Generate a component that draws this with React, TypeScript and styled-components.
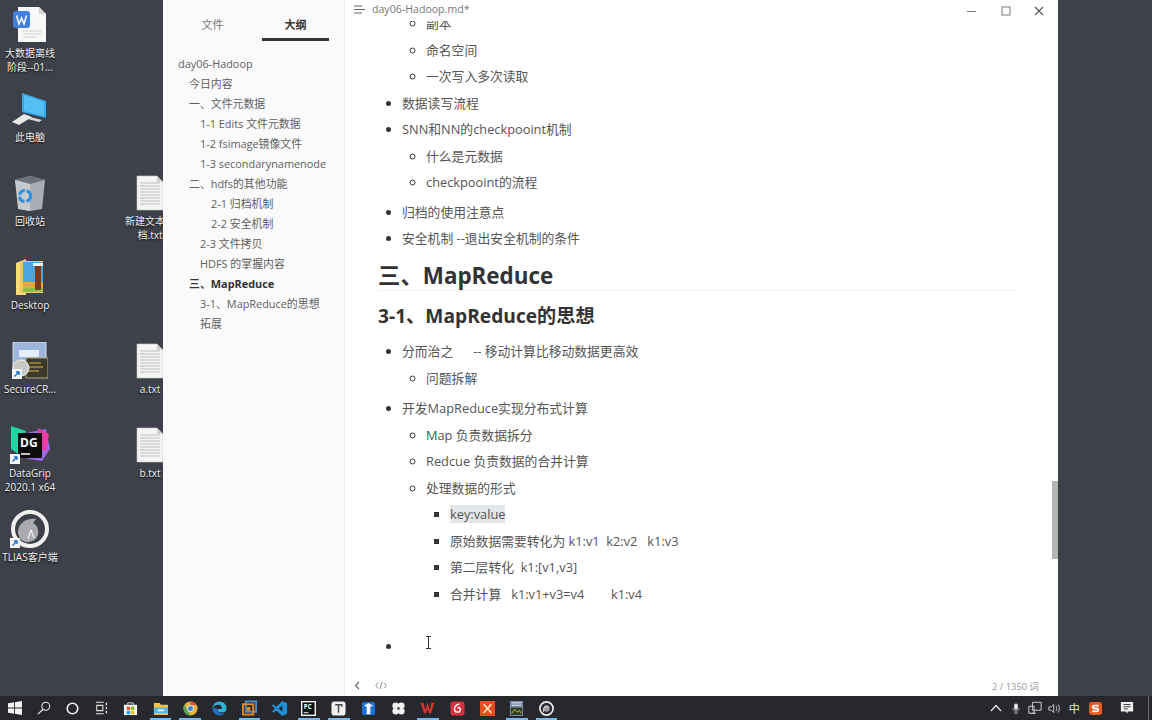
import React from "react";
import styled, { createGlobalStyle } from "styled-components";

const FONT = `"Open Sans", "Noto Sans CJK SC", sans-serif`;

const Global = createGlobalStyle`
  html, body { margin: 0; padding: 0; background: #3e4149; overflow: hidden; }
  * { box-sizing: border-box; }
`;

const Screen = styled.div`
  width: 1152px;
  height: 720px;
  display: flex;
  flex-direction: column;
  font-family: ${FONT};
  overflow: hidden;
`;

const Desktop = styled.div`
  position: relative;
  flex: none;
  height: 696px;
  background: #3e4149;
  padding: 0 94px 0 163px;
  display: flex;
`;

const DesktopIcon = styled.div<{ $x: number; $y: number }>`
  position: absolute;
  left: ${(p) => p.$x}px;
  top: ${(p) => p.$y}px;
  width: 60px;
  display: flex;
  flex-direction: column;
  align-items: center;
`;

const IconArt = styled.div`
  width: 40px;
  height: 40px;
  display: flex;
  align-items: center;
  justify-content: center;
`;

const IconLabel = styled.div`
  margin-top: 1px;
  width: 66px;
  color: #f2f2f2;
  font-size: 10px;
  line-height: 14px;
  text-align: center;
  white-space: pre;
  text-shadow: 0 1px 2px #000;
`;

const Window = styled.div`
  position: relative;
  flex: 1;
  display: flex;
  min-width: 0;
  background: #fff;
  z-index: 1;
`;

const Sidebar = styled.aside`
  flex: none;
  width: 182px;
  background: #fafafa;
  border-right: 1px solid #f0f0f0;
  display: flex;
  flex-direction: column;
`;

const Tabs = styled.div`
  display: flex;
  height: 41px;
  padding: 0 0 0 16px;
  gap: 16px;
`;

const Tab = styled.div<{ $active?: boolean }>`
  flex: none;
  width: 67px;
  display: flex;
  align-items: center;
  justify-content: center;
  padding-top: 9px;
  font-size: 11px;
  font-weight: ${(p) => (p.$active ? 700 : 400)};
  color: ${(p) => (p.$active ? "#333" : "#777")};
  border-bottom: 3px solid ${(p) => (p.$active ? "#333" : "transparent")};
`;

const Outline = styled.nav`
  display: flex;
  flex-direction: column;
  padding: 13px 0 0 15px;
`;

const OutlineItem = styled.div<{ $level: number; $strong?: boolean }>`
  height: 20px;
  line-height: 20px;
  font-size: 10.9px;
  white-space: nowrap;
  padding-left: ${(p) => p.$level * 11}px;
  color: ${(p) => (p.$strong ? "#333" : "#5e5e5e")};
  font-weight: ${(p) => (p.$strong ? 700 : 400)};
`;

const Main = styled.main`
  position: relative;
  flex: 1;
  min-width: 0;
  display: flex;
  flex-direction: column;
`;

const TitleBar = styled.header`
  flex: none;
  height: 21px;
  display: flex;
  align-items: center;
  padding: 0 0 3px 9px;
  background: #fff;
  position: relative;
  z-index: 2;
`;

const FileName = styled.span`
  margin-left: 6px;
  font-size: 10.6px;
  color: #777;
`;

const WinControls = styled.div`
  margin-left: auto;
  display: flex;
  align-items: center;
  padding: 4px 2px 0 0;
`;

const WinButton = styled.div`
  width: 33.5px;
  height: 14px;
  display: flex;
  align-items: center;
  justify-content: center;
`;

const Doc = styled.article`
  flex: 1;
  min-height: 0;
  overflow: hidden;
  padding: 0 40px 0 33px;
  color: #555;
  font-size: 12.8px;
  line-height: 20.5px;
`;

const List = styled.ul<{ $kind: "disc" | "circle" | "square"; $top?: number }>`
  margin: ${(p) => p.$top ?? 0}px 0 0;
  padding: 0 0 0 24px;
  list-style-type: ${(p) => p.$kind};
`;

const Item = styled.li<{ $gap?: number; $bare?: boolean }>`
  margin-top: ${(p) => p.$gap ?? 6}px;
  white-space: pre;
  ${(p) => (p.$bare ? "list-style: none;" : "")}
  &::marker { color: #333; }
`;

const NestedOnly = styled.ul<{ $top?: number }>`
  margin: ${(p) => p.$top ?? 0}px 0 0 -24px;
  padding: 0 0 0 48px;
  list-style-type: circle;
`;

const H1 = styled.h1`
  margin: 14px 0 0;
  padding-bottom: 1px;
  font-size: 22.4px;
  line-height: 26px;
  font-weight: 700;
  color: #333;
  border-bottom: 1px solid #f2f2f2;
`;

const H2 = styled.h2`
  margin: 11px 0 0;
  font-size: 19.2px;
  line-height: 28px;
  font-weight: 700;
  color: #333;
`;

const Mark = styled.span`
  background: #e4e7ea;
  padding: 0;
`;

const EmptyLine = styled.div`
  height: 20.5px;
`;

const StatusBar = styled.footer`
  flex: none;
  height: 21px;
  display: flex;
  align-items: center;
  padding: 0 19px 0 9px;
  gap: 15px;
  background: #fff;
`;

const WordCount = styled.span`
  margin-left: auto;
  font-size: 9.4px;
  color: #9a9a9a;
`;

const Scrollbar = styled.div`
  position: absolute;
  right: 0;
  top: 481px;
  width: 6px;
  height: 78px;
  background: #b4b4b4;
`;

const Caret = styled.div`
  position: absolute;
  left: 80px;
  top: 636px;
  display: flex;
`;

const Taskbar = styled.footer`
  flex: none;
  height: 24px;
  display: flex;
  align-items: stretch;
  background: #26282c;
`;

const SysGroup = styled.div`
  display: flex;
  width: 116px;
`;

const SysSlot = styled.div`
  width: 29px;
  display: flex;
  align-items: center;
  justify-content: center;
`;

const AppGroup = styled.div`
  display: flex;
`;

const AppSlot = styled.div<{ $open?: boolean }>`
  position: relative;
  width: 29.7px;
  display: flex;
  align-items: center;
  justify-content: center;
  &::after {
    content: "";
    display: ${(p) => (p.$open ? "block" : "none")};
    position: absolute;
    left: 4px;
    right: 4px;
    bottom: 0;
    height: 2px;
    background: #76b9ed;
  }
`;

const Tray = styled.div`
  margin-left: auto;
  display: flex;
  align-items: center;
  padding-right: 3px;
`;

const TraySlot = styled.div<{ $w?: number }>`
  width: ${(p) => p.$w ?? 19.5}px;
  display: flex;
  align-items: center;
  justify-content: center;
  color: #e8e8e8;
  font-size: 11px;
`;

const ShowDesktop = styled.div`
  width: 1px;
  height: 24px;
  margin-left: 2px;
  background: #6a6c70;
`;

/* ---------- drawings ---------- */

const TextFile = () => (
  <svg width="28" height="36" viewBox="0 0 28 36">
    <path d="M1 1h20l6 6v28H1z" fill="#f4f4f4" stroke="#c9c9c9" strokeWidth=".6" />
    <path d="M21 1v6h6z" fill="#d0d0d0" />
    {[8, 11, 14, 17, 20, 23, 26, 29].map((y) => (
      <path key={y} d={`M4 ${y}h20`} stroke="#bdbdbd" strokeWidth="1" />
    ))}
  </svg>
);

const WpsDoc = () => (
  <svg width="34" height="36" viewBox="0 0 34 36">
    <path d="M5 0h21l7 7v28H5z" fill="#f8f8f8" />
    <path d="M26 0v7h7z" fill="#d5d5d5" />
    <path d="M10 24h19M10 27h19M10 30h14" stroke="#d4d4d4" />
    <rect x="0" y="4" width="17" height="17" rx="3" fill="#3f7fe0" />
    <path d="M3.500 8.500l2.500 8.500 2.500-6 2.500 6 2.500-8.500" fill="none" stroke="#fff" strokeWidth="1.500" />
  </svg>
);

const ThisPc = () => (
  <svg width="36" height="34" viewBox="0 0 36 34">
    <path d="M10 1l24 8v17l-24-6z" fill="#35a8ee" />
    <path d="M12 3l20 7v14l-20-5z" fill="#56c0f5" />
    <path d="M18 25l12 3-3 2-11-3z" fill="#d9d9d9" />
    <path d="M12 22l8 3-13 8-7-3z" fill="#e8e8e8" />
  </svg>
);

const RecycleBin = () => (
  <svg width="32" height="36" viewBox="0 0 32 36">
    <path d="M1 5l15-4 15 4-3 29-12 2-10-2z" fill="#a9afb5" />
    <path d="M1 5l15-4 15 4-15 4z" fill="#6e747b" />
    <path d="M1 5l3 29 12 2V9z" fill="#c5cacf" />
    <circle cx="11" cy="21" r="5.500" fill="none" stroke="#2a8fe0" strokeWidth="3" strokeDasharray="7 2" />
  </svg>
);

const FolderArt = () => (
  <svg width="28" height="36" viewBox="0 0 28 36">
    <path d="M0 4l10-4v36H0z" fill="#ffd97a" />
    <path d="M4 2h23v32H4z" fill="#f3c95f" />
    <path d="M7 3h20v20H7z" fill="#4aa6df" />
    <path d="M7 23h20v6H7z" fill="#e9a93a" />
    <path d="M7 29h20v4H7z" fill="#8fbf4a" />
    <path d="M19 7h6v24h-6z" fill="#7a3b1d" />
    <path d="M17 4h10v3H17z" fill="#f6f6f6" />
  </svg>
);

const Shortcut = () => (
  <g>
    <rect x="0" y="27" width="10" height="10" fill="#f5f5f5" />
    <path d="M2.500 34.500l4-4M4 30h3v3" stroke="#1f6fd0" strokeWidth="1.400" fill="none" />
  </g>
);

const SecureCrt = () => (
  <svg width="36" height="38" viewBox="0 0 36 38">
    <rect x="1" y="0" width="33" height="28" fill="#9db7dc" stroke="#d7e1ef" />
    <rect x="7" y="8" width="20" height="7" fill="#e6edf7" />
    <rect x="14" y="16" width="22" height="20" fill="#3c3a2c" stroke="#b6a878" />
    <path d="M17 21h12M17 25h14M17 29h10" stroke="#d9b23d" strokeWidth="1.200" />
    <circle cx="9" cy="26" r="8" fill="#c9c9c4" stroke="#eee" />
    <Shortcut />
  </svg>
);

const DataGrip = () => (
  <svg width="40" height="40" viewBox="0 0 40 40">
    <path d="M2 2l14 6 20-4 4 20-8 12-14-2-14-10z" fill="#9a6be8" />
    <path d="M1 1l15 5-6 24-9-6z" fill="#22d3a5" />
    <path d="M28 3l11 6-3 17-8-2z" fill="#ef39a8" />
    <rect x="8" y="8" width="24" height="25" fill="#0c0c0e" />
    <text x="10" y="22" fontFamily="Open Sans" fontWeight="700" fontSize="12" fill="#fff">DG</text>
    <path d="M11 29h9" stroke="#fff" strokeWidth="1.500" />
    <g transform="translate(0,2)"><Shortcut /></g>
  </svg>
);

const Tlias = () => (
  <svg width="40" height="40" viewBox="0 0 40 40">
    <circle cx="20" cy="20" r="17" fill="#3e4149" stroke="#f0f0f0" strokeWidth="4" />
    <path d="M8 24c0-10 8-15 18-14l-3 4c4 2 6 6 5 12-2 5-6 7-11 7-5 0-8-4-9-9z" fill="#a9abae" />
    <path d="M18 30l3-9 3 8" fill="none" stroke="#fff" strokeWidth="1" />
    <g transform="translate(0,2)"><Shortcut /></g>
  </svg>
);

const Hamburger = () => (
  <svg width="12" height="9" viewBox="0 0 12 9">
    <path d="M0 1h8M0 4.500h11M0 8h8" stroke="#666" strokeWidth="1" />
  </svg>
);

const MinIcon = () => (
  <svg width="10" height="10" viewBox="0 0 10 10"><path d="M0 5.500h9" stroke="#777" /></svg>
);
const MaxIcon = () => (
  <svg width="10" height="10" viewBox="0 0 10 10"><rect x="1" y="1" width="8" height="8" fill="none" stroke="#777" /></svg>
);
const CloseIcon = () => (
  <svg width="10" height="10" viewBox="0 0 10 10"><path d="M1 1l8 8M9 1l-8 8" stroke="#555" strokeWidth="1.100" /></svg>
);

const ChevronLeft = () => (
  <svg width="6" height="9" viewBox="0 0 6 9"><path d="M5 1L1.500 4.500 5 8" fill="none" stroke="#666" strokeWidth="1.200" /></svg>
);
const CodeIcon = () => (
  <svg width="12" height="9" viewBox="0 0 12 9"><path d="M3 1.500L.8 4.500 3 7.500M9 1.500l2.200 3-2.200 3M7 1L5 8" fill="none" stroke="#888" strokeWidth=".9" /></svg>
);
const IBeam = () => (
  <svg width="7" height="13" viewBox="0 0 7 13"><path d="M1 .5h5M1 12.500h5M3.500 .5v12" fill="none" stroke="#333" strokeWidth="1" /></svg>
);

const S = ({ children, w = 16, h = 16, view = "0 0 16 16" }: { children: React.ReactNode; w?: number; h?: number; view?: string }) => (
  <svg width={w} height={h} viewBox={view} style={{ flex: "none" }}>{children}</svg>
);

const sysIcons = [
  <S key="win" w={14} h={14}><path d="M0 2.500l7-1v6H0zM8 1.300l8-1.300v7.500H8zM0 8.500h7v6l-7-1zM8 8.500h8V16l-8-1.300z" fill="#f4f4f4" /></S>,
  <S key="search" w={14} h={14}><circle cx="10" cy="6" r="4.500" fill="none" stroke="#e8e8e8" strokeWidth="1.200" /><path d="M7 9.500L1 15" stroke="#e8e8e8" strokeWidth="1.400" /></S>,
  <S key="cortana" w={13} h={13}><circle cx="8" cy="8" r="6.500" fill="none" stroke="#f0f0f0" strokeWidth="2" /></S>,
  <S key="tasks" w={14} h={14}><path d="M1 1.500h9M1 14.500h9M2 5h7v6H2z" fill="none" stroke="#e8e8e8" strokeWidth="1.200" /><path d="M13 2v3M13 7v2M13 11v3" stroke="#e8e8e8" strokeWidth="1.500" /></S>,
];

const appIcons: { open?: boolean; art: React.ReactNode }[] = [
  { art: <S w={15} h={15}><path d="M1 4h14v11H1z" fill="#f4f4f4" /><path d="M5 4V2h6v2" fill="none" stroke="#ddd" /><rect x="4" y="6" width="3.500" height="3.500" fill="#f25022" /><rect x="8.500" y="6" width="3.500" height="3.500" fill="#7fba00" /><rect x="4" y="10.500" width="3.500" height="3.500" fill="#00a4ef" /><rect x="8.500" y="10.500" width="3.500" height="3.500" fill="#ffb900" /></S> },
  { open: true, art: <S w={17} h={15}><path d="M1 2h6l1.500 2H16v11H1z" fill="#f5c242" /><path d="M1 7h15v6H1z" fill="#59b4e8" /><path d="M5 9h7v2H5z" fill="#e9eef2" /></S> },
  { open: true, art: <S w={15} h={15}><circle cx="8" cy="8" r="7.500" fill="#e8b43a" /><path d="M8 .5a7.500 7.500 0 0 1 6.500 3.800H8z" fill="#d9503f" /><path d="M1.500 4.300L5 11l3 4.500A7.500 7.500 0 0 1 1.500 4.300z" fill="#4da85a" /><circle cx="8" cy="8" r="3.200" fill="#3f84d8" stroke="#eee" /></S> },
  { art: <S w={15} h={15}><path d="M8 .5C3.500.5 .5 4 .5 8c1-3 4-4.500 7-4 3 .5 3.500 3 2.500 4.500H6c-.5 3 3 5 8 3 1.500-1.500 1.500-3 1.500-4C15.500 3.500 12 .5 8 .5z" fill="#2fb2d6" /><path d="M.5 8c0 4 3.500 7.500 8 7.500 2.500 0 4.500-1.500 5.500-3-4 1.500-8.500 0-8-3.500-1.500-2-4.500-2-5.500-1z" fill="#1d6fbd" /></S> },
  { open: true, art: <S w={15} h={16}><rect x="4" y="1" width="11" height="11" fill="none" stroke="#4a90d0" strokeWidth="2" /><rect x="1" y="4" width="11" height="11" fill="none" stroke="#e58a1f" strokeWidth="2" /><rect x="5" y="7" width="4" height="4" fill="#e58a1f" /></S> },
  { art: <S w={15} h={15}><path d="M11 0l5 2.500v11L11 16 4.500 10 1.500 12.500 0 11.500 3 8 0 4.500 1.500 3.500 4.500 6zM11 4.500L7 8l4 3.500z" fill="#1f8fd8" fillRule="evenodd" /></S> },
  { open: true, art: <S w={15} h={15}><rect width="16" height="16" fill="#f0f0f0" /><rect x="1.500" y="1.500" width="13" height="13" fill="#111" /><text x="3" y="9" fontSize="6.500" fontWeight="700" fontFamily="Open Sans" fill="#fff">PC</text><path d="M3 12.500h5" stroke="#fff" /></S> },
  { open: true, art: <S w={15} h={15}><rect x=".5" y=".5" width="15" height="15" rx="3" fill="#f0f0f0" /><path d="M4.500 4h7v2M8 4v8.500" fill="none" stroke="#444" strokeWidth="1.500" /></S> },
  { art: <S w={15} h={15}><rect x="1" y="1" width="14" height="14" rx="2" fill="#1b6fd8" /><path d="M3 5l5-3 5 3-3 1v8H6V6z" fill="#f4f8ff" /></S> },
  { art: <S w={15} h={15}><circle cx="5" cy="5" r="3.500" fill="#f0f0f0" /><circle cx="11" cy="5" r="3.500" fill="#f0f0f0" /><circle cx="5" cy="11" r="3.500" fill="#f0f0f0" /><circle cx="11" cy="11" r="3.500" fill="#f0f0f0" /><circle cx="8" cy="8" r="1.500" fill="#555" /></S> },
  { open: true, art: <S w={15} h={14}><path d="M0 2h3.500L5.500 10 8 2l2.500 8L12.500 2H16l-4 12H9.500L8 9 6.500 14H4z" fill="#d8322c" /></S> },
  { art: <S w={15} h={15}><rect x=".5" y=".5" width="15" height="15" rx="3" fill="#dc3040" /><path d="M10 3C6 4 4 7 5 10c1 2.500 5 2.500 6 0 .5-2-1-3.500-3-3" fill="none" stroke="#fff" strokeWidth="1.500" /></S> },
  { art: <S w={15} h={15}><rect width="16" height="16" fill="#e84e20" /><path d="M4 3.500l8 9M12 3.500l-8 9" stroke="#fbe6c8" strokeWidth="1.800" /></S> },
  { open: true, art: <S w={15} h={15}><rect x="1" y="0" width="14" height="16" fill="#7d8ba8" /><path d="M3 2h10M3 4.500h10" stroke="#dfe6f2" /><rect x="2" y="7" width="12" height="8" fill="#2f3d24" /><path d="M3 13l3-4 3 3 2-2 2 3" fill="none" stroke="#b7cf54" /></S> },
  { open: true, art: <S w={15} h={15}><circle cx="8" cy="8" r="7" fill="none" stroke="#ececec" strokeWidth="1.800" /><circle cx="8" cy="8" r="3.500" fill="#9a9ca0" /><path d="M5 12c-1-3 0-6 4-6" fill="none" stroke="#ececec" /></S> },
];

const DESKTOP_ICONS = [
  { x: 0, y: 5, art: <WpsDoc />, label: "大数据离线\n阶段--01..." },
  { x: 0, y: 89, art: <ThisPc />, label: "此电脑" },
  { x: 0, y: 173, art: <RecycleBin />, label: "回收站" },
  { x: 0, y: 257, art: <FolderArt />, label: "Desktop" },
  { x: 0, y: 341, art: <SecureCrt />, label: "SecureCR..." },
  { x: 0, y: 425, art: <DataGrip />, label: "DataGrip\n2020.1 x64" },
  { x: 0, y: 509, art: <Tlias />, label: "TLIAS客户端" },
  { x: 120, y: 173, art: <TextFile />, label: "新建文本文\n档.txt" },
  { x: 120, y: 341, art: <TextFile />, label: "a.txt" },
  { x: 120, y: 425, art: <TextFile />, label: "b.txt" },
];

const OUTLINE: { text: string; level: number; strong?: boolean }[] = [
  { text: "day06-Hadoop", level: 0 },
  { text: "今日内容", level: 1 },
  { text: "一、文件元数据", level: 1 },
  { text: "1-1 Edits 文件元数据", level: 2 },
  { text: "1-2 fsimage镜像文件", level: 2 },
  { text: "1-3 secondarynamenode", level: 2 },
  { text: "二、hdfs的其他功能", level: 1 },
  { text: "2-1 归档机制", level: 3 },
  { text: "2-2 安全机制", level: 3 },
  { text: "2-3 文件拷贝", level: 2 },
  { text: "HDFS 的掌握内容", level: 2 },
  { text: "三、MapReduce", level: 1, strong: true },
  { text: "3-1、MapReduce的思想", level: 2 },
  { text: "拓展", level: 2 },
];

export default function App() {
  return (
    <Screen>
      <Global />
      <Desktop>
        {DESKTOP_ICONS.map((d) => (
          <DesktopIcon key={d.label} $x={d.x} $y={d.y}>
            <IconArt>{d.art}</IconArt>
            <IconLabel>{d.label}</IconLabel>
          </DesktopIcon>
        ))}
        <Window>
          <Sidebar>
            <Tabs>
              <Tab>文件</Tab>
              <Tab $active>大纲</Tab>
            </Tabs>
            <Outline>
              {OUTLINE.map((o) => (
                <OutlineItem key={o.text} $level={o.level} $strong={o.strong}>{o.text}</OutlineItem>
              ))}
            </Outline>
          </Sidebar>
          <Main>
            <TitleBar>
              <Hamburger />
              <FileName>day06-Hadoop.md*</FileName>
              <WinControls>
                <WinButton><MinIcon /></WinButton>
                <WinButton><MaxIcon /></WinButton>
                <WinButton><CloseIcon /></WinButton>
              </WinControls>
            </TitleBar>
            <Doc>
              <List $kind="disc" $top={-8}>
                <Item $gap={0} $bare>
                  <NestedOnly>
                    <Item $gap={0}>副本</Item>
                    <Item>命名空间</Item>
                    <Item>一次写入多次读取</Item>
                  </NestedOnly>
                </Item>
                <Item>数据读写流程</Item>
                <Item>
                  SNN和NN的checkpooint机制
                  <List $kind="circle" $top={0}>
                    <Item>什么是元数据</Item>
                    <Item>checkpooint的流程</Item>
                  </List>
                </Item>
                <Item $gap={9}>归档的使用注意点</Item>
                <Item>安全机制 --退出安全机制的条件</Item>
              </List>
              <H1>三、MapReduce</H1>
              <H2>3-1、MapReduce的思想</H2>
              <List $kind="disc" $top={11.5}>
                <Item $gap={0}>
                  {"分而治之      -- 移动计算比移动数据更高效"}
                  <List $kind="circle">
                    <Item>问题拆解</Item>
                  </List>
                </Item>
                <Item $gap={10}>
                  开发MapReduce实现分布式计算
                  <List $kind="circle">
                    <Item>Map 负责数据拆分</Item>
                    <Item>Redcue 负责数据的合并计算</Item>
                    <Item>
                      处理数据的形式
                      <List $kind="square">
                        <Item><Mark>key:value</Mark></Item>
                        <Item>{"原始数据需要转化为 k1:v1  k2:v2   k1:v3"}</Item>
                        <Item>{"第二层转化  k1:[v1,v3]"}</Item>
                        <Item>{"合并计算   k1:v1+v3=v4        k1:v4"}</Item>
                      </List>
                    </Item>
                  </List>
                </Item>
                <Item $gap={32}><EmptyLine /></Item>
              </List>
            </Doc>
            <StatusBar>
              <ChevronLeft />
              <CodeIcon />
              <WordCount>2 / 1350 词</WordCount>
            </StatusBar>
            <Caret><IBeam /></Caret>
            <Scrollbar />
          </Main>
        </Window>
      </Desktop>
      <Taskbar>
        <SysGroup>
          {sysIcons.map((ic) => (
            <SysSlot key={ic.key}>{ic}</SysSlot>
          ))}
        </SysGroup>
        <AppGroup>
          {appIcons.map((a, i) => (
            <AppSlot key={i} $open={a.open}>{a.art}</AppSlot>
          ))}
        </AppGroup>
        <Tray>
          <TraySlot>
            <S w={12} h={8} view="0 0 12 8"><path d="M1 7l5-5.500L11 7" fill="none" stroke="#e8e8e8" strokeWidth="1.200" /></S>
          </TraySlot>
          <TraySlot>
            <S w={10} h={15}><rect x="5" y="0" width="6" height="10" rx="3" fill="#e4e4e4" /><path d="M3 7c0 7 10 7 10 0M8 12v3M5 15.500h6" fill="none" stroke="#e4e4e4" /></S>
          </TraySlot>
          <TraySlot>
            <S w={14} h={14}><path d="M5 1.500h10v9H5zM1 6h6v8H1zM4 14h5" fill="#26282c" stroke="#e4e4e4" /></S>
          </TraySlot>
          <TraySlot>
            <S w={13} h={13}><path d="M1 6h3l3-3v10l-3-3H1z" fill="none" stroke="#e4e4e4" /><path d="M10 5c1 2 1 4 0 6M12.500 3c2 3 2 7 0 10" fill="none" stroke="#e4e4e4" /></S>
          </TraySlot>
          <TraySlot>中</TraySlot>
          <TraySlot $w={23}>
            <S w={13} h={13}><rect width="16" height="16" rx="3" fill="#e9581e" /><path d="M12 4.500H6.500C4 4.500 4 8 6.500 8h3c2.500 0 2.500 3.500 0 3.500H4" fill="none" stroke="#fff" strokeWidth="2.200" /></S>
          </TraySlot>
          <TraySlot $w={39}>
            <S w={14} h={14}><path d="M1 1h14v11H9l-1 2.500L7 12H1z" fill="#f0f0f0" /><path d="M4 4h8M4 6.500h8M4 9h5" stroke="#26282c" /></S>
          </TraySlot>
          <ShowDesktop />
        </Tray>
      </Taskbar>
    </Screen>
  );
}
